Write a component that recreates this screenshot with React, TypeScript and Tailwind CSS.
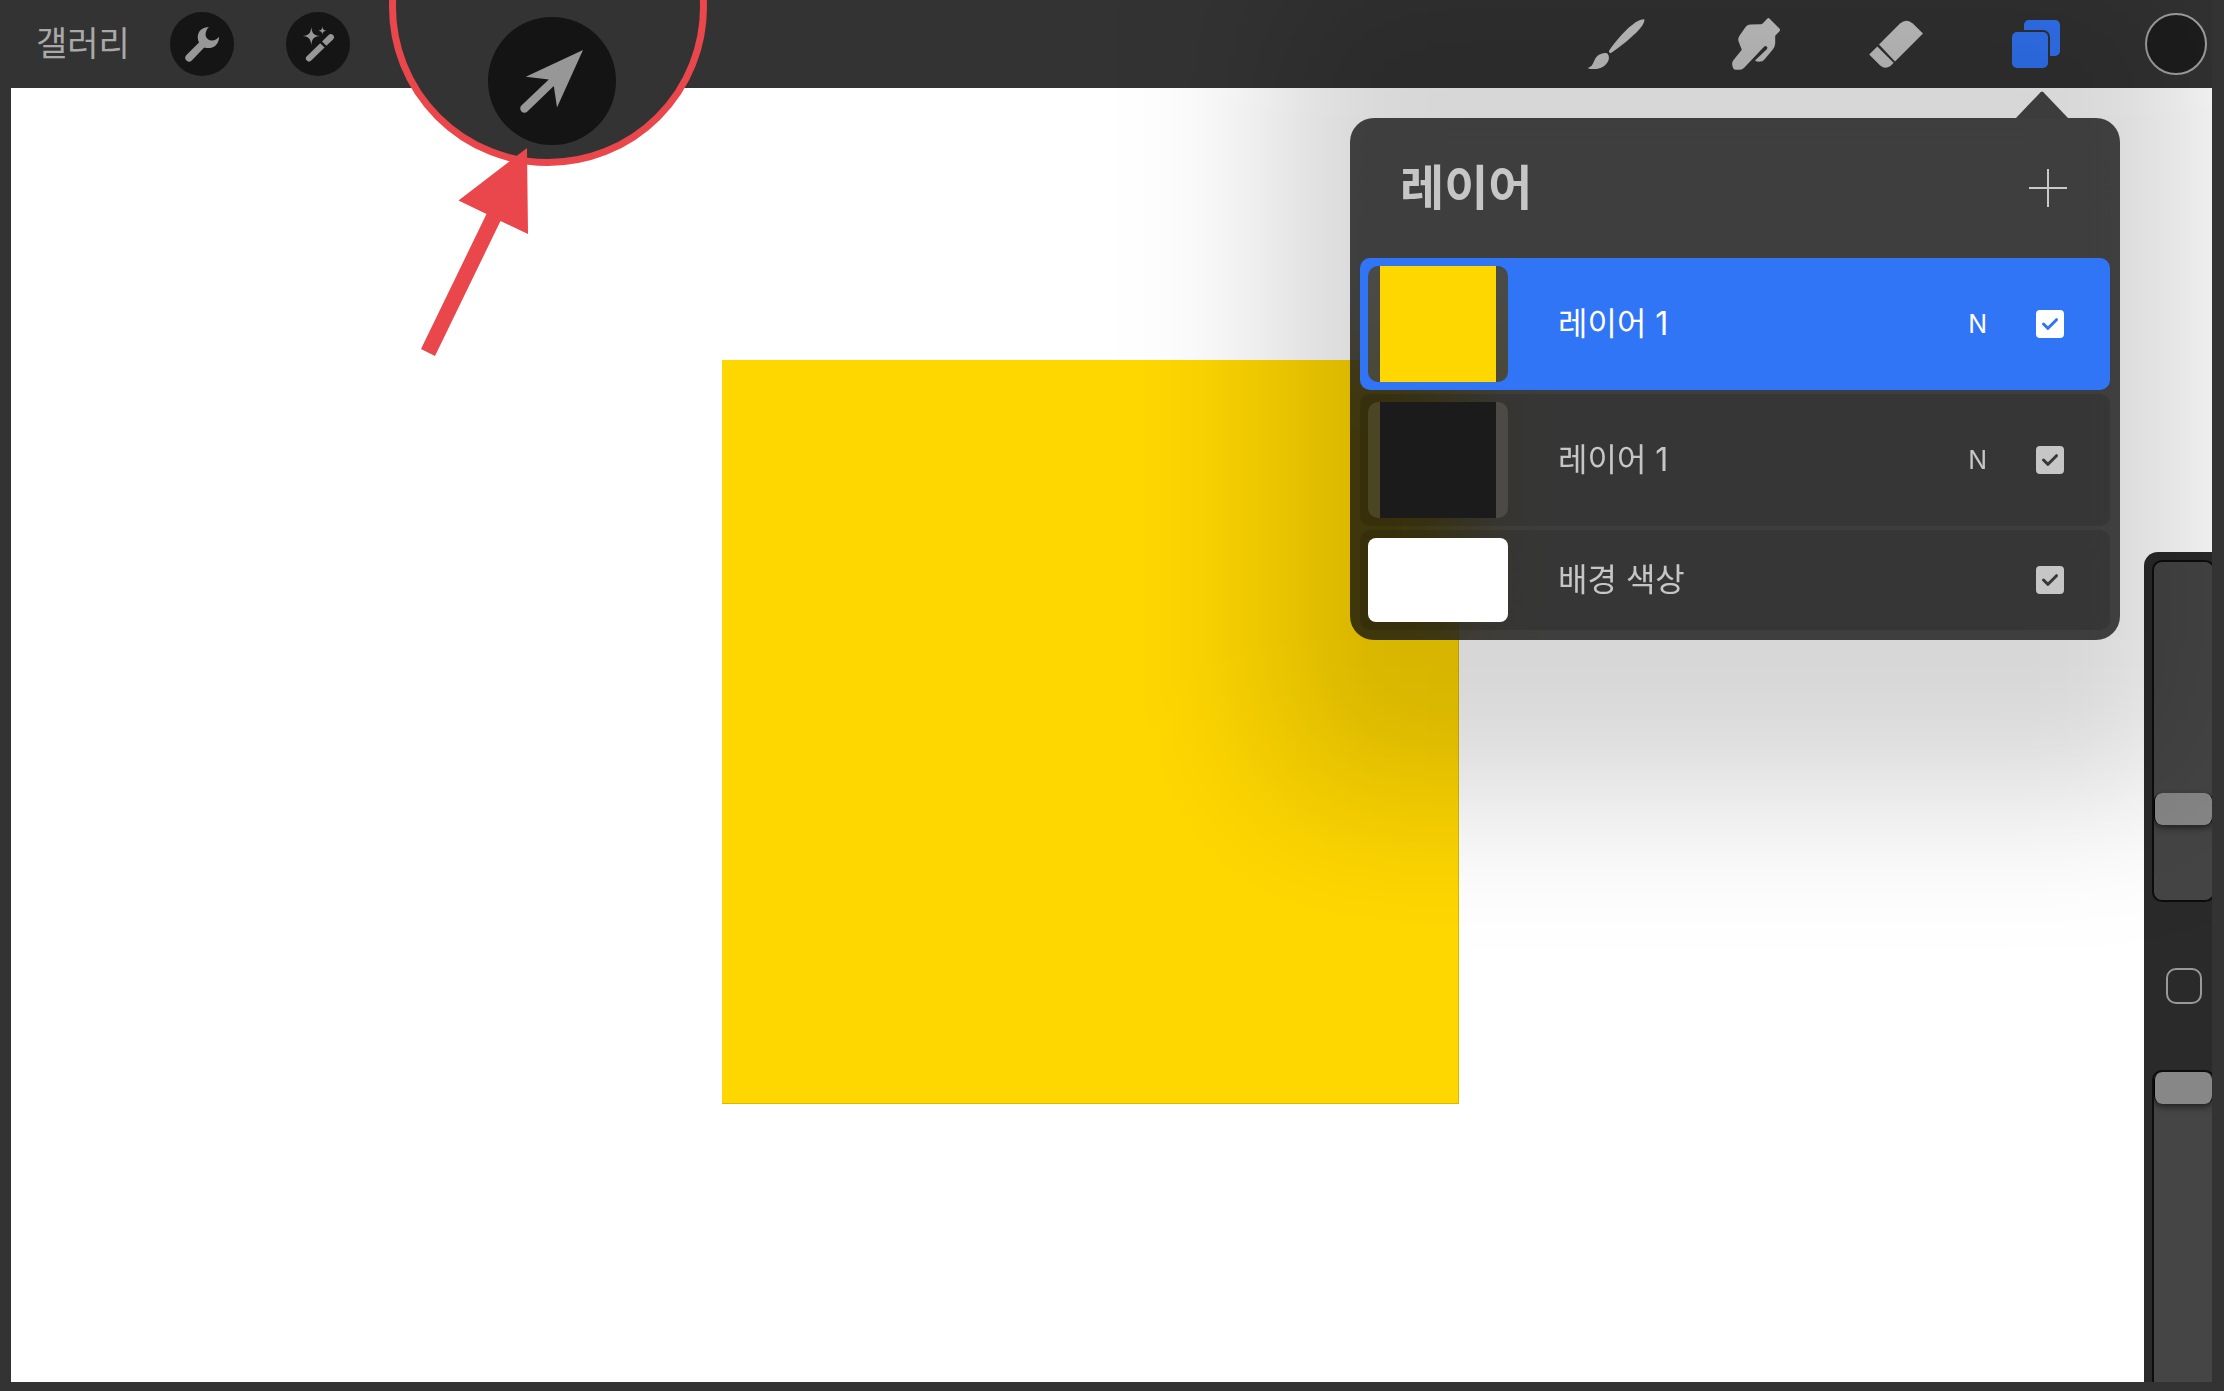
import type { ReactNode } from "react";

type Layer = {
  id: string;
  name: string;
  blend?: string;
  fill: string;
  selected?: boolean;
  background?: boolean;
};

const layers: Layer[] = [
  { id: "layer-2", name: "레이어 1", blend: "N", fill: "bg-[#ffd700]", selected: true },
  { id: "layer-1", name: "레이어 1", blend: "N", fill: "bg-[#1b1b1b]" },
  { id: "background", name: "배경 색상", fill: "bg-white", background: true },
];

function WrenchIcon() {
  return (
    <svg viewBox="0 0 64 64" className="h-16 w-16" fill="currentColor">
      <path d="M39 15C34 15.2 30.2 17.2 28.6 21C27.2 24.4 27.6 27.6 29 30.4L16.2 43.2A3.9 3.9 0 0 0 21.8 48.6L34.2 35.4C38 36.6 42.6 36.2 45.6 33.4C48.2 31 49.2 28 49 24.8C46.8 27.6 43.6 29.2 40 28.2C36.6 27 35 23.8 35.8 20.4C36.4 18.2 37.6 16.2 39 15Z" />
    </svg>
  );
}

function WandIcon() {
  return (
    <svg viewBox="0 0 64 64" className="h-16 w-16" fill="currentColor">
      <path d="M25.3 15C26 21.4 27.6 23.4 34 24.1C27.6 24.8 26 26.8 25.3 33C24.6 26.8 23 24.8 16.6 24.1C23 23.4 24.6 21.4 25.3 15Z" />
      <path d="M36.4 14.6C36.8 17.6 37.5 18.3 40.4 18.7C37.5 19.1 36.8 19.8 36.4 22.8C36 19.8 35.3 19.1 32.4 18.7C35.3 18.3 36 17.6 36.4 14.6Z" />
      <path d="M34.2 31.2L38.6 35.6L25.2 48.6A3.1 3.1 0 0 1 20.8 44.2Z" />
      <path d="M36 29.4L42.6 23A3.1 3.1 0 0 1 47 27.4L40.4 33.8Z" />
    </svg>
  );
}

function BrushIcon() {
  return (
    <svg viewBox="0 0 64 64" className="h-16 w-16" fill="currentColor">
      <path d="M60.2 7.2C61 9.4 58.4 13.8 55.4 17.2C48 25.4 36 35 26.6 41.2C25.4 41 24.6 40 25 38.8C29.4 32 36.4 23.6 42.8 17.4C48.4 12 55.6 7 60.2 7.2Z" />
      <path d="M23 41.2C24.8 42.6 25.4 45 24.6 48C23.2 52 19.6 55.2 15.6 56.2C12 57.2 7.2 57.6 4 56.2C4.4 55 6.4 55.2 8 53.2C10 50.6 10.2 47.4 12.6 44.8C15.4 41.8 20 40.6 23 41.2Z" />
    </svg>
  );
}

function SmudgeIcon() {
  return (
    <svg viewBox="0 0 64 64" className="h-16 w-16" fill="currentColor">
      <path d="M43.4 6.6Q44.4 5.6 45.4 6.6L55.4 16.6Q56.6 18 55.6 19.2L51.2 23.8V31.4Q51 35 48.4 38L40.4 47.4Q38.6 49.6 36 49.6Q32.6 49.8 31 48.4L42.8 37.2Q44 35.4 42.6 34.4Q41.4 33.6 40 34.8L20.4 55.4Q18.2 57.8 15.8 57.8H11.6Q9.6 57.8 8.8 55.2Q7.4 51.6 9 48.8L17.8 37.8L14.6 29.6Q13.6 26.6 15.6 23.4L21.6 15Q23.2 12.8 26 12.6L37.2 12.2Q38.4 12 39.2 11Z" />
    </svg>
  );
}

function EraserIcon() {
  return (
    <svg viewBox="0 0 64 64" className="h-16 w-16" fill="currentColor">
      <path d="M15 32.4L36 11.6Q42.4 6 48.8 11.4L59 21.4L31 49.4Z" />
      <path d="M13.3 34.4L29.6 50.8Q23 59 16.2 53.4L5.2 42.4Z" />
    </svg>
  );
}

function LayersIcon() {
  return (
    <svg viewBox="0 0 64 64" className="h-16 w-16" fill="currentColor">
      <path d="M25 8H51A5 5 0 0 1 56 13V39A5 5 0 0 1 51 44H46V25A7 7 0 0 0 39 18H20V13A5 5 0 0 1 25 8Z" />
      <rect x="8" y="20" width="36" height="36" rx="5" />
    </svg>
  );
}

function ColorIcon() {
  return (
    <svg viewBox="0 0 64 64" className="h-16 w-16">
      <circle cx="32" cy="32" r="30" fill="#1e1e1e" stroke="#a4a4a4" strokeWidth="2" />
    </svg>
  );
}

function ToolButton({
  label,
  className = "text-[#cbcbcb]",
  children,
}: {
  label: string;
  className?: string;
  children: ReactNode;
}) {
  return (
    <button type="button" aria-label={label} className={`h-16 w-16 ${className}`}>
      {children}
    </button>
  );
}

function TopBar() {
  return (
    <header className="flex h-[88px] shrink-0 items-center justify-between bg-[#333333] pl-[25px] pr-1">
      <div className="flex items-center">
        <button type="button" className="mr-[38px] w-24 text-left text-[34px] leading-10 text-[#a9a9a9]">
          갤러리
        </button>
        <div className="flex gap-[52px]">
          <ToolButton label="동작" className="rounded-full bg-[#151515] text-[#979797]">
            <WrenchIcon />
          </ToolButton>
          <ToolButton label="조정" className="rounded-full bg-[#151515] text-[#979797]">
            <WandIcon />
          </ToolButton>
        </div>
      </div>
      <div className="flex gap-[76px]">
        <ToolButton label="브러시">
          <BrushIcon />
        </ToolButton>
        <ToolButton label="스머지">
          <SmudgeIcon />
        </ToolButton>
        <ToolButton label="지우개">
          <EraserIcon />
        </ToolButton>
        <ToolButton label="레이어" className="text-[#3378fe]">
          <LayersIcon />
        </ToolButton>
        <ToolButton label="색상">
          <ColorIcon />
        </ToolButton>
      </div>
    </header>
  );
}

function LayerRow({ layer }: { layer: Layer }) {
  const tone = layer.selected ? "bg-[#3175f7] text-white" : "bg-black/13 text-[#c6c6c6]";
  return (
    <li className={`flex items-center rounded-[10px] p-2 pr-[46px] ${tone}`}>
      {layer.background ? (
        <span className={`h-[84px] w-[140px] rounded-lg ${layer.fill}`} />
      ) : (
        <span
          className={`flex h-[116px] w-[140px] justify-center rounded-[10px] ${
            layer.selected ? "bg-linear-to-b from-[#4a4a4a] to-[#4a4838]" : "bg-white/10"
          }`}
        >
          <span className={`w-[116px] ${layer.fill}`} />
        </span>
      )}
      <label htmlFor={layer.id} className="ml-[50px] flex-1 text-[32px] leading-10">
        {layer.name}
      </label>
      {layer.blend ? (
        <button type="button" className="mr-[49px] text-[25px] leading-8">
          {layer.blend}
        </button>
      ) : null}
      <span className="grid h-7 w-7">
        <input
          id={layer.id}
          type="checkbox"
          defaultChecked
          className="col-start-1 row-start-1 h-7 w-7 appearance-none rounded bg-current"
        />
        <svg
          viewBox="0 0 28 28"
          fill="none"
          strokeWidth="3"
          strokeLinecap="round"
          strokeLinejoin="round"
          className={`pointer-events-none col-start-1 row-start-1 h-7 w-7 ${
            layer.selected ? "stroke-[#3175f7]" : "stroke-[#383838]"
          }`}
        >
          <path d="M7.5 14L12 18.3L20.5 9.7" />
        </svg>
      </span>
    </li>
  );
}

function LayersPopover() {
  return (
    <>
      {/* soft shadow that reaches over the toolbar and the sliders */}
      <div className="pointer-events-none absolute -top-10 right-[18px] h-[835px] w-[922px] rounded-[60px] bg-black/16 blur-[76px]" />
      <section aria-label="레이어" className="absolute right-[92px] top-[118px] w-[770px]">
        <svg viewBox="0 0 52 27" className="absolute -top-[27px] right-[52px] h-[27px] w-[52px] fill-[#3c3c3c]">
          <path d="M0 27L24.6 1.2Q26 0 27.4 1.2L52 27Z" />
        </svg>
        <div className="rounded-3xl bg-[#101010]/77 px-2.5 pb-2.5 backdrop-blur-[40px]">
          <div className="flex h-[140px] items-center justify-between pl-10 pr-[43px]">
            <h2 className="text-[48px] font-bold leading-[60px] text-[#c6c6c6]">레이어</h2>
            <button type="button" aria-label="레이어 추가" className="text-[#c9c9c9]">
              <svg viewBox="0 0 38 38" className="h-[38px] w-[38px]" stroke="currentColor" strokeWidth="2">
                <path d="M0 19H38M19 0V38" />
              </svg>
            </button>
          </div>
          <ul className="flex flex-col gap-1">
            {layers.map((layer) => (
              <LayerRow key={layer.id} layer={layer} />
            ))}
          </ul>
        </div>
      </section>
    </>
  );
}

function VerticalSlider({ label, value, className }: { label: string; value: number; className: string }) {
  return (
    <input
      type="range"
      aria-label={label}
      step={0.5}
      defaultValue={value}
      className={`block w-[63px] shrink-0 appearance-none overflow-hidden border-2 border-[#0d0d0d] bg-[#454545] [direction:rtl] [writing-mode:vertical-lr] [&::-webkit-slider-thumb]:h-8 [&::-webkit-slider-thumb]:w-[59px] [&::-webkit-slider-thumb]:appearance-none [&::-webkit-slider-thumb]:rounded-lg [&::-webkit-slider-thumb]:border-y [&::-webkit-slider-thumb]:border-t-[#a8a8a8] [&::-webkit-slider-thumb]:border-b-[#6c6c6c] [&::-webkit-slider-thumb]:bg-[#878787] [&::-webkit-slider-thumb]:shadow-[0_3px_6px_rgba(0,0,0,0.5)] ${className}`}
    />
  );
}

function Sidebar() {
  return (
    <aside className="mt-[464px] flex w-[68px] flex-col overflow-hidden rounded-tl-[14px] bg-[#2a2a2a] pl-2 pt-2">
      <VerticalSlider label="브러시 크기" value={24.5} className="h-[342px] rounded-[10px]" />
      <button
        type="button"
        aria-label="수정"
        className="my-[66px] ml-3.5 h-9 w-9 shrink-0 rounded-[10px] border-2 border-[#999999]"
      />
      <VerticalSlider label="불투명도" value={100} className="h-[342px] rounded-t-[10px]" />
    </aside>
  );
}

function TransformCallout() {
  return (
    <>
      <div className="absolute -top-[152px] left-[378px] flex h-[318px] w-[318px] items-end justify-center rounded-full border-7 border-[#e9474c] bg-[#333333] pb-3.5 pl-2">
        <button type="button" aria-label="변형" className="h-32 w-32 rounded-full bg-[#141414] text-[#979797]">
          <svg viewBox="0 0 128 128" className="h-32 w-32" fill="currentColor">
            <path d="M95 33L69 90.5L65.8 69L39.4 94.4A4 4 0 0 1 33.4 88.6L60.8 62.4L37.8 59.8Z" />
          </svg>
        </button>
      </div>
      <svg viewBox="0 0 108 210" className="absolute left-[410px] top-[147px] h-[210px] w-[108px] fill-[#e9474c]">
        <path d="M106 1L107 87L79.5 74L14 209L0 202L65.5 67L37.5 53.5Z" />
      </svg>
    </>
  );
}

export default function App() {
  return (
    <div className="h-screen w-full bg-[#333333] pb-[9px] pl-[11px] pr-3 font-['Inter','Noto_Sans_CJK_KR',sans-serif]">
      <div className="relative flex h-full flex-col overflow-hidden">
        <TopBar />
        <main className="relative flex min-h-0 flex-1 justify-end bg-white">
          <div className="absolute left-[711px] top-[272px] h-[744px] w-[737px] border-b border-r border-[#d9b800] bg-[#ffd700]" />
          <Sidebar />
        </main>
        <LayersPopover />
        <TransformCallout />
      </div>
    </div>
  );
}
